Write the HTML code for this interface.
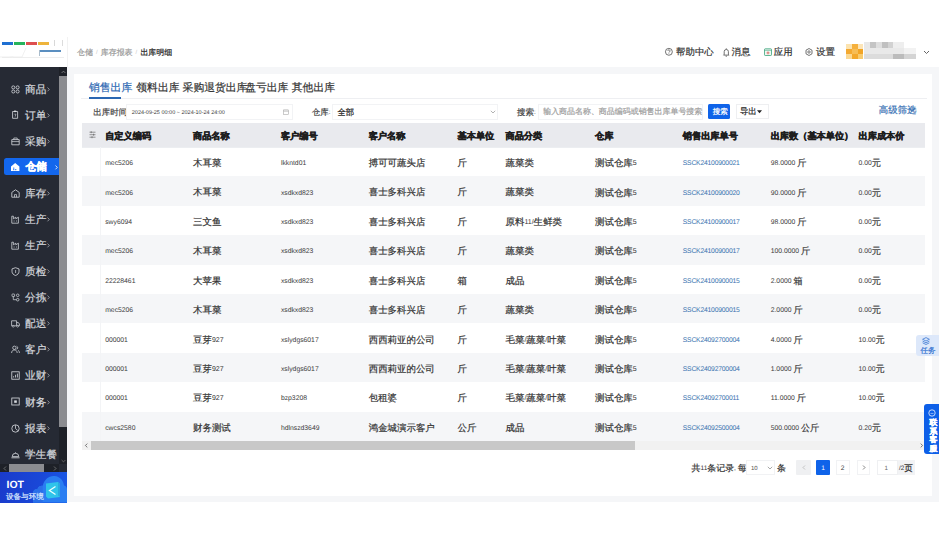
<!DOCTYPE html>
<html lang="zh"><head><meta charset="utf-8"><title>出库明细</title><style>
*{box-sizing:border-box;margin:0;padding:0}
html,body{width:939px;height:540px;overflow:hidden;background:#fff;font-family:"Liberation Sans",sans-serif;color:#333;text-rendering:geometricPrecision}
.a{position:absolute;white-space:nowrap}
.zh{font-size:1.35em;line-height:0;vertical-align:-0.094em;-webkit-text-stroke-width:0.2px}
.b .zh{-webkit-text-stroke-width:0.45px}
svg{position:absolute;overflow:visible}
</style></head><body>
<div class="a" style="left:2px;top:42px;width:11px;height:3px;background:#1f6fd2;"></div>
<div class="a" style="left:14px;top:42px;width:11px;height:3px;background:#27b35c;"></div>
<div class="a" style="left:26px;top:42px;width:11px;height:3px;background:#de4f4f;"></div>
<div class="a" style="left:38px;top:42px;width:11px;height:3px;background:#eeb43c;"></div>
<div class="a" style="left:39px;top:50px;width:22px;height:1.5px;background:#5b8fc0;"></div>
<div class="a" style="left:39px;top:50px;width:1px;height:6px;background:#a9bccc;"></div>
<div class="a" style="left:67px;top:37px;width:1px;height:30px;background:#f2f2f2;"></div>
<div class="a" style="left:54px;top:40px;width:0.8px;height:6px;background:#d8d8d8;"></div>
<div class="a" style="left:62px;top:40px;width:0.8px;height:6px;background:#dcdcdc;"></div>
<div class="a" style="left:2px;top:57px;width:62px;height:0.6px;background:#eeeeee;"></div>
<svg style="left:0;top:44px" width="40" height="14" viewBox="0 0 40 14"><path d="M0 13h8c3 0 4-1 6 0h8l4-9" fill="none" stroke="#e6e6e6" stroke-width="0.6"/></svg>
<div class="a" style="left:77px;top:47.26px;font-size:5.9px;line-height:12px;color:#9a9a9a;"><span class="zh">仓储</span><span style="color:#c8c8c8;margin:0 3.2px 0 3px">/</span><span class="zh">库存报表</span><span style="color:#c8c8c8;margin:0 3.2px 0 3px">/</span><span style="color:#222"><span class="zh">出库明细</span></span></div>
<svg style="left:664.8px;top:47.6px" width="8" height="8" viewBox="0 0 8 8"><circle cx="3.9" cy="3.8" r="3.45" fill="none" stroke="#444" stroke-width="0.75"/><path d="M2.8 2.9a1.1 1.1 0 1 1 1.6 1c-.4.2-.5.4-.5.8" fill="none" stroke="#444" stroke-width="0.7"/><circle cx="3.9" cy="5.7" r=".42" fill="#444"/></svg>
<div class="a" style="left:676px;top:47.37px;font-size:7px;line-height:12px;color:#333;"><span class="zh">帮助中心</span></div>
<svg style="left:722.8px;top:47.6px" width="7" height="9" viewBox="0 0 7 9"><path d="M1.2 6.4V3.6a2.1 2.1 0 0 1 4.2 0v2.8l.7.7H.5z" fill="none" stroke="#444" stroke-width="0.75"/><path d="M2.6 8.2h1.4M3.3 .3v1" stroke="#444" stroke-width="0.7"/></svg>
<div class="a" style="left:731.6px;top:47.37px;font-size:7px;line-height:12px;color:#333;"><span class="zh">消息</span></div>
<svg style="left:763.5px;top:48px" width="8" height="8" viewBox="0 0 8 8"><rect x=".5" y=".8" width="7" height="6.7" rx=".7" fill="#eef8f3" stroke="#3aa37a" stroke-width="0.8"/><path d="M.5 2.3h7" stroke="#3aa37a" stroke-width="0.6"/><path d="M4 3.4v3M2.5 4.9h3" stroke="#d9534f" stroke-width="0.75"/></svg>
<div class="a" style="left:773.8px;top:47.37px;font-size:7px;line-height:12px;color:#333;"><span class="zh">应用</span></div>
<svg style="left:805.2px;top:47.8px" width="8" height="8" viewBox="0 0 8 8"><path d="M4 .5L7 2.2v3.6L4 7.5 1 5.8V2.2z" fill="none" stroke="#444" stroke-width="0.75" stroke-linejoin="round"/><circle cx="4" cy="4" r="1.2" fill="none" stroke="#444" stroke-width="0.7"/></svg>
<div class="a" style="left:816px;top:47.37px;font-size:7px;line-height:12px;color:#333;"><span class="zh">设置</span></div>
<div class="a" style="left:0;top:0;width:939px;height:70px;filter:blur(0.6px)">
<div class="a" style="left:846px;top:44px;width:5.5px;height:4.5px;background:#fbe3b0;"></div>
<div class="a" style="left:851.5px;top:44px;width:6px;height:4.5px;background:#f5b03c;"></div>
<div class="a" style="left:857.5px;top:44px;width:5.5px;height:4.5px;background:#fce5b8;"></div>
<div class="a" style="left:846px;top:48.5px;width:5.5px;height:5.5px;background:#f4a931;"></div>
<div class="a" style="left:851.5px;top:48.5px;width:6px;height:5.5px;background:#f7bd55;"></div>
<div class="a" style="left:857.5px;top:48.5px;width:5.5px;height:5.5px;background:#f2a526;"></div>
<div class="a" style="left:846px;top:54px;width:5.5px;height:5px;background:#fbd892;"></div>
<div class="a" style="left:851.5px;top:54px;width:6px;height:5px;background:#f3a82c;"></div>
<div class="a" style="left:857.5px;top:54px;width:5.5px;height:5px;background:#f8cb6e;"></div>
<div class="a" style="left:864px;top:42px;width:5.5px;height:6px;background:#e8e8e8;"></div>
<div class="a" style="left:869.5px;top:42px;width:6.5px;height:6px;background:#c4c4c4;"></div>
<div class="a" style="left:876px;top:42px;width:5.5px;height:6px;background:#dedede;"></div>
<div class="a" style="left:881.5px;top:42px;width:6px;height:6px;background:#c0c0c0;"></div>
<div class="a" style="left:887.5px;top:42px;width:5.5px;height:6px;background:#d2d2d2;"></div>
<div class="a" style="left:893px;top:42px;width:11px;height:6px;background:#eeeeee;"></div>
<div class="a" style="left:864px;top:48px;width:40px;height:6px;background:#e9e9e9;"></div>
<div class="a" style="left:904px;top:48px;width:12px;height:6px;background:#f2f2f2;"></div>
<div class="a" style="left:864px;top:54px;width:29px;height:5px;background:#dcdcdc;"></div>
<div class="a" style="left:893px;top:54px;width:11px;height:5px;background:#bcbcbc;"></div>
<div class="a" style="left:904px;top:54px;width:12px;height:5px;background:#d4d4d4;"></div>
</div>
<svg style="left:922.5px;top:49.5px" width="7" height="5" viewBox="0 0 7 5"><path d="M1 1l2.5 2.5L6 1" fill="none" stroke="#555" stroke-width="0.9"/></svg>
<div class="a" style="left:67px;top:67px;width:872px;height:435px;background:#f5f6f8;"></div>
<div class="a" style="left:74px;top:74px;width:858px;height:422px;background:#ffffff;"></div>
<div class="a" style="left:89px;top:82.45px;font-size:8px;line-height:12px;color:#2b67b2;"><span class="zh">销售出库</span></div>
<div class="a" style="left:136.3px;top:82.45px;font-size:8px;line-height:12px;color:#333;"><span class="zh">领料出库</span></div>
<div class="a" style="left:182.6px;top:82.45px;font-size:8px;line-height:12px;color:#333;"><span class="zh">采购退货出库</span></div>
<div class="a" style="left:245.2px;top:82.45px;font-size:8px;line-height:12px;color:#333;"><span class="zh">盘亏出库</span></div>
<div class="a" style="left:291.8px;top:82.45px;font-size:8px;line-height:12px;color:#333;"><span class="zh">其他出库</span></div>
<div class="a" style="left:81px;top:98px;width:846px;height:1px;background:#eeeff2;"></div>
<div class="a" style="left:89px;top:97.4px;width:32px;height:1.6px;background:#2b67b2;"></div>
<div class="a" style="left:93.2px;top:107.19px;font-size:6.3px;line-height:12px;color:#444;"><span class="zh">出库时间</span>:</div>
<div class="a" style="left:126px;top:103.5px;width:166.5px;height:16.5px;background:#fff;border:1px solid #f2f3f5"></div>
<div class="a" style="left:131.8px;top:106.72px;font-size:5.5px;line-height:12px;color:#3a3a3a;">2024-09-25 00:00 ~ 2024-10-24 24:00</div>
<svg style="left:283px;top:108.5px" width="6" height="6" viewBox="0 0 6 6"><rect x=".5" y="1" width="5" height="4.5" fill="none" stroke="#aaa" stroke-width="0.6"/><path d="M.5 2.4h5M2 .3v1.2M4 .3v1.2" stroke="#aaa" stroke-width="0.5"/></svg>
<div class="a" style="left:311.7px;top:107.19px;font-size:6.3px;line-height:12px;color:#444;"><span class="zh">仓库</span>:</div>
<div class="a" style="left:331.6px;top:103.5px;width:166.5px;height:16.5px;background:#fff;border:1px solid #f2f3f5"></div>
<div class="a" style="left:337.5px;top:106.74px;font-size:6.2px;line-height:12px;color:#222;"><span class="zh">全部</span></div>
<svg style="left:489.5px;top:110px" width="6" height="4" viewBox="0 0 6 4"><path d="M.8 .8L3 3l2.2-2.2" fill="none" stroke="#888" stroke-width="0.65"/></svg>
<div class="a" style="left:517px;top:107.19px;font-size:6.3px;line-height:12px;color:#444;"><span class="zh">搜索</span>:</div>
<div class="a" style="left:537.7px;top:103.5px;width:165px;height:16px;background:#fff;border:1px solid #f2f3f5"></div>
<div class="a" style="left:543.2px;top:106.36px;font-size:5.9px;line-height:12px;color:#a0a0a0;"><span class="zh">输入商品名称、商品编码或销售出库单号搜索</span></div>
<div class="a" style="left:707.7px;top:104px;width:22.5px;height:14.5px;background:#0f63e9;border-radius:1.5px"></div>
<div class="a" style="left:712.8px;top:106.26px;font-size:5.6px;line-height:12px;color:#fff;"><span class="zh">搜索</span></div>
<div class="a" style="left:736px;top:104px;width:33px;height:14.5px;background:#fff;border:1px solid #eeeff1"></div>
<div class="a" style="left:740px;top:106.24px;font-size:6.2px;line-height:12px;color:#222;"><span class="zh">导出</span></div>
<svg style="left:757px;top:109.8px" width="5" height="4" viewBox="0 0 5 4"><path d="M0 .3h5L2.5 3.3z" fill="#222"/></svg>
<div class="a" style="left:878.8px;top:104.67px;font-size:7px;line-height:12px;color:#3c74b6;"><span class="zh">高级筛选</span></div>
<svg style="left:907.5px;top:106.5px" width="8" height="6" viewBox="0 0 8 6"><path d="M.8 1l3.2 3.3L7.2 1" fill="none" stroke="#3c74b6" stroke-width="1.1"/></svg>
<div class="a" style="left:82px;top:123px;width:843px;height:24px;background:#e9eaee;"></div>
<div class="a" style="left:82px;top:146.5px;width:843px;height:0.5px;background:#eceef1;"></div>
<svg style="left:89px;top:131px" width="7" height="8" viewBox="0 0 7 8"><path d="M.5 1.2h6M.5 3.7h6M.5 6.2h6M2.2 .2v2M4.6 2.7v2M3 5.2v2" stroke="#555" stroke-width="0.6"/></svg>
<div class="a b" style="left:105.2px;top:131.19px;font-size:6.8px;line-height:12px;color:#1f1f1f;font-weight:bold"><span class="zh">自定义编码</span></div>
<div class="a b" style="left:193px;top:131.19px;font-size:6.8px;line-height:12px;color:#1f1f1f;font-weight:bold"><span class="zh">商品名称</span></div>
<div class="a b" style="left:280.9px;top:131.19px;font-size:6.8px;line-height:12px;color:#1f1f1f;font-weight:bold"><span class="zh">客户编号</span></div>
<div class="a b" style="left:368.7px;top:131.19px;font-size:6.8px;line-height:12px;color:#1f1f1f;font-weight:bold"><span class="zh">客户名称</span></div>
<div class="a b" style="left:457.6px;top:131.19px;font-size:6.8px;line-height:12px;color:#1f1f1f;font-weight:bold"><span class="zh">基本单位</span></div>
<div class="a b" style="left:505.5px;top:131.19px;font-size:6.8px;line-height:12px;color:#1f1f1f;font-weight:bold"><span class="zh">商品分类</span></div>
<div class="a b" style="left:595px;top:131.19px;font-size:6.8px;line-height:12px;color:#1f1f1f;font-weight:bold"><span class="zh">仓库</span></div>
<div class="a b" style="left:682.8px;top:131.19px;font-size:6.8px;line-height:12px;color:#1f1f1f;font-weight:bold"><span class="zh">销售出库单号</span></div>
<div class="a b" style="left:770.7px;top:131.19px;font-size:6.8px;line-height:12px;color:#1f1f1f;font-weight:bold"><span class="zh">出库数（基本单位）</span></div>
<div class="a b" style="left:858.6px;top:131.19px;font-size:6.8px;line-height:12px;color:#1f1f1f;font-weight:bold"><span class="zh">出库成本价</span></div>
<div class="a" style="left:100px;top:147.0px;width:0.5px;height:29.41px;background:#f3f4f6;"></div>
<div class="a" style="left:105.2px;top:158.11px;font-size:6.8px;line-height:12px;color:#3c3c3c;">mec5206</div>
<div class="a" style="left:193px;top:158.07px;font-size:7px;line-height:12px;color:#333;"><span class="zh">木耳菜</span></div>
<div class="a" style="left:280.9px;top:158.11px;font-size:6.8px;line-height:12px;color:#3c3c3c;">lkkntd01</div>
<div class="a" style="left:368.7px;top:158.07px;font-size:7px;line-height:12px;color:#333;"><span class="zh">搏可可蔬头店</span></div>
<div class="a" style="left:457.6px;top:158.07px;font-size:7px;line-height:12px;color:#333;"><span class="zh">斤</span></div>
<div class="a" style="left:505.5px;top:158.07px;font-size:7px;line-height:12px;color:#333;"><span class="zh">蔬菜类</span></div>
<div class="a" style="left:595px;top:158.09px;font-size:7px;line-height:12px;color:#333;"><span class="zh">测试仓库</span>5</div>
<div class="a" style="left:682.8px;top:158.11px;font-size:6.8px;line-height:12px;color:#3a74b0;letter-spacing:-0.22px">SSCK24100900021</div>
<div class="a" style="left:770.7px;top:158.16px;font-size:6.8px;line-height:12px;color:#3c3c3c;">98.0000 <span class="zh">斤</span></div>
<div class="a" style="left:858.6px;top:158.16px;font-size:6.8px;line-height:12px;color:#3c3c3c;">0.00<span class="zh">元</span></div>
<div class="a" style="left:82px;top:176.41px;width:843px;height:29.41px;background:#f5f6f8;"></div>
<div class="a" style="left:100px;top:176.41px;width:0.5px;height:29.41px;background:#f3f4f6;"></div>
<div class="a" style="left:105.2px;top:187.52px;font-size:6.8px;line-height:12px;color:#3c3c3c;">mec5206</div>
<div class="a" style="left:193px;top:187.48px;font-size:7px;line-height:12px;color:#333;"><span class="zh">木耳菜</span></div>
<div class="a" style="left:280.9px;top:187.52px;font-size:6.8px;line-height:12px;color:#3c3c3c;">xsdkxd823</div>
<div class="a" style="left:368.7px;top:187.48px;font-size:7px;line-height:12px;color:#333;"><span class="zh">喜士多科兴店</span></div>
<div class="a" style="left:457.6px;top:187.48px;font-size:7px;line-height:12px;color:#333;"><span class="zh">斤</span></div>
<div class="a" style="left:505.5px;top:187.48px;font-size:7px;line-height:12px;color:#333;"><span class="zh">蔬菜类</span></div>
<div class="a" style="left:595px;top:187.50px;font-size:7px;line-height:12px;color:#333;"><span class="zh">测试仓库</span>5</div>
<div class="a" style="left:682.8px;top:187.52px;font-size:6.8px;line-height:12px;color:#3a74b0;letter-spacing:-0.22px">SSCK24100900020</div>
<div class="a" style="left:770.7px;top:187.57px;font-size:6.8px;line-height:12px;color:#3c3c3c;">90.0000 <span class="zh">斤</span></div>
<div class="a" style="left:858.6px;top:187.57px;font-size:6.8px;line-height:12px;color:#3c3c3c;">0.00<span class="zh">元</span></div>
<div class="a" style="left:100px;top:205.82px;width:0.5px;height:29.41px;background:#f3f4f6;"></div>
<div class="a" style="left:105.2px;top:216.93px;font-size:6.8px;line-height:12px;color:#3c3c3c;">swy6094</div>
<div class="a" style="left:193px;top:216.89px;font-size:7px;line-height:12px;color:#333;"><span class="zh">三文鱼</span></div>
<div class="a" style="left:280.9px;top:216.93px;font-size:6.8px;line-height:12px;color:#3c3c3c;">xsdkxd823</div>
<div class="a" style="left:368.7px;top:216.89px;font-size:7px;line-height:12px;color:#333;"><span class="zh">喜士多科兴店</span></div>
<div class="a" style="left:457.6px;top:216.89px;font-size:7px;line-height:12px;color:#333;"><span class="zh">斤</span></div>
<div class="a" style="left:505.5px;top:216.91px;font-size:7px;line-height:12px;color:#333;"><span class="zh">原料</span>11/<span class="zh">生鲜类</span></div>
<div class="a" style="left:595px;top:216.91px;font-size:7px;line-height:12px;color:#333;"><span class="zh">测试仓库</span>5</div>
<div class="a" style="left:682.8px;top:216.93px;font-size:6.8px;line-height:12px;color:#3a74b0;letter-spacing:-0.22px">SSCK24100900017</div>
<div class="a" style="left:770.7px;top:216.98px;font-size:6.8px;line-height:12px;color:#3c3c3c;">98.0000 <span class="zh">斤</span></div>
<div class="a" style="left:858.6px;top:216.98px;font-size:6.8px;line-height:12px;color:#3c3c3c;">0.00<span class="zh">元</span></div>
<div class="a" style="left:82px;top:235.23000000000002px;width:843px;height:29.41px;background:#f5f6f8;"></div>
<div class="a" style="left:100px;top:235.23000000000002px;width:0.5px;height:29.41px;background:#f3f4f6;"></div>
<div class="a" style="left:105.2px;top:246.34px;font-size:6.8px;line-height:12px;color:#3c3c3c;">mec5206</div>
<div class="a" style="left:193px;top:246.30px;font-size:7px;line-height:12px;color:#333;"><span class="zh">木耳菜</span></div>
<div class="a" style="left:280.9px;top:246.34px;font-size:6.8px;line-height:12px;color:#3c3c3c;">xsdkxd823</div>
<div class="a" style="left:368.7px;top:246.30px;font-size:7px;line-height:12px;color:#333;"><span class="zh">喜士多科兴店</span></div>
<div class="a" style="left:457.6px;top:246.30px;font-size:7px;line-height:12px;color:#333;"><span class="zh">斤</span></div>
<div class="a" style="left:505.5px;top:246.30px;font-size:7px;line-height:12px;color:#333;"><span class="zh">蔬菜类</span></div>
<div class="a" style="left:595px;top:246.32px;font-size:7px;line-height:12px;color:#333;"><span class="zh">测试仓库</span>5</div>
<div class="a" style="left:682.8px;top:246.34px;font-size:6.8px;line-height:12px;color:#3a74b0;letter-spacing:-0.22px">SSCK24100900017</div>
<div class="a" style="left:770.7px;top:246.39px;font-size:6.8px;line-height:12px;color:#3c3c3c;">100.0000 <span class="zh">斤</span></div>
<div class="a" style="left:858.6px;top:246.39px;font-size:6.8px;line-height:12px;color:#3c3c3c;">0.00<span class="zh">元</span></div>
<div class="a" style="left:100px;top:264.64px;width:0.5px;height:29.41px;background:#f3f4f6;"></div>
<div class="a" style="left:105.2px;top:275.75px;font-size:6.8px;line-height:12px;color:#3c3c3c;">22228461</div>
<div class="a" style="left:193px;top:275.71px;font-size:7px;line-height:12px;color:#333;"><span class="zh">大苹果</span></div>
<div class="a" style="left:280.9px;top:275.75px;font-size:6.8px;line-height:12px;color:#3c3c3c;">xsdkxd823</div>
<div class="a" style="left:368.7px;top:275.71px;font-size:7px;line-height:12px;color:#333;"><span class="zh">喜士多科兴店</span></div>
<div class="a" style="left:457.6px;top:275.71px;font-size:7px;line-height:12px;color:#333;"><span class="zh">箱</span></div>
<div class="a" style="left:505.5px;top:275.71px;font-size:7px;line-height:12px;color:#333;"><span class="zh">成品</span></div>
<div class="a" style="left:595px;top:275.73px;font-size:7px;line-height:12px;color:#333;"><span class="zh">测试仓库</span>5</div>
<div class="a" style="left:682.8px;top:275.75px;font-size:6.8px;line-height:12px;color:#3a74b0;letter-spacing:-0.22px">SSCK24100900015</div>
<div class="a" style="left:770.7px;top:275.80px;font-size:6.8px;line-height:12px;color:#3c3c3c;">2.0000 <span class="zh">箱</span></div>
<div class="a" style="left:858.6px;top:275.80px;font-size:6.8px;line-height:12px;color:#3c3c3c;">0.00<span class="zh">元</span></div>
<div class="a" style="left:82px;top:294.05px;width:843px;height:29.41px;background:#f5f6f8;"></div>
<div class="a" style="left:100px;top:294.05px;width:0.5px;height:29.41px;background:#f3f4f6;"></div>
<div class="a" style="left:105.2px;top:305.16px;font-size:6.8px;line-height:12px;color:#3c3c3c;">mec5206</div>
<div class="a" style="left:193px;top:305.12px;font-size:7px;line-height:12px;color:#333;"><span class="zh">木耳菜</span></div>
<div class="a" style="left:280.9px;top:305.16px;font-size:6.8px;line-height:12px;color:#3c3c3c;">xsdkxd823</div>
<div class="a" style="left:368.7px;top:305.12px;font-size:7px;line-height:12px;color:#333;"><span class="zh">喜士多科兴店</span></div>
<div class="a" style="left:457.6px;top:305.12px;font-size:7px;line-height:12px;color:#333;"><span class="zh">斤</span></div>
<div class="a" style="left:505.5px;top:305.12px;font-size:7px;line-height:12px;color:#333;"><span class="zh">蔬菜类</span></div>
<div class="a" style="left:595px;top:305.14px;font-size:7px;line-height:12px;color:#333;"><span class="zh">测试仓库</span>5</div>
<div class="a" style="left:682.8px;top:305.16px;font-size:6.8px;line-height:12px;color:#3a74b0;letter-spacing:-0.22px">SSCK24100900015</div>
<div class="a" style="left:770.7px;top:305.21px;font-size:6.8px;line-height:12px;color:#3c3c3c;">2.0000 <span class="zh">斤</span></div>
<div class="a" style="left:858.6px;top:305.21px;font-size:6.8px;line-height:12px;color:#3c3c3c;">0.00<span class="zh">元</span></div>
<div class="a" style="left:100px;top:323.46000000000004px;width:0.5px;height:29.41px;background:#f3f4f6;"></div>
<div class="a" style="left:105.2px;top:334.57px;font-size:6.8px;line-height:12px;color:#3c3c3c;">000001</div>
<div class="a" style="left:193px;top:334.55px;font-size:7px;line-height:12px;color:#333;"><span class="zh">豆芽</span>927</div>
<div class="a" style="left:280.9px;top:334.57px;font-size:6.8px;line-height:12px;color:#3c3c3c;">xslydgs6017</div>
<div class="a" style="left:368.7px;top:334.53px;font-size:7px;line-height:12px;color:#333;"><span class="zh">西西莉亚的公司</span></div>
<div class="a" style="left:457.6px;top:334.53px;font-size:7px;line-height:12px;color:#333;"><span class="zh">斤</span></div>
<div class="a" style="left:505.5px;top:334.55px;font-size:7px;line-height:12px;color:#333;"><span class="zh">毛菜</span>/<span class="zh">蔬菜</span>/<span class="zh">叶菜</span></div>
<div class="a" style="left:595px;top:334.55px;font-size:7px;line-height:12px;color:#333;"><span class="zh">测试仓库</span>5</div>
<div class="a" style="left:682.8px;top:334.57px;font-size:6.8px;line-height:12px;color:#3a74b0;letter-spacing:-0.22px">SSCK24092700004</div>
<div class="a" style="left:770.7px;top:334.62px;font-size:6.8px;line-height:12px;color:#3c3c3c;">4.0000 <span class="zh">斤</span></div>
<div class="a" style="left:858.6px;top:334.62px;font-size:6.8px;line-height:12px;color:#3c3c3c;">10.00<span class="zh">元</span></div>
<div class="a" style="left:82px;top:352.87px;width:843px;height:29.41px;background:#f5f6f8;"></div>
<div class="a" style="left:100px;top:352.87px;width:0.5px;height:29.41px;background:#f3f4f6;"></div>
<div class="a" style="left:105.2px;top:363.98px;font-size:6.8px;line-height:12px;color:#3c3c3c;">000001</div>
<div class="a" style="left:193px;top:363.96px;font-size:7px;line-height:12px;color:#333;"><span class="zh">豆芽</span>927</div>
<div class="a" style="left:280.9px;top:363.98px;font-size:6.8px;line-height:12px;color:#3c3c3c;">xslydgs6017</div>
<div class="a" style="left:368.7px;top:363.94px;font-size:7px;line-height:12px;color:#333;"><span class="zh">西西莉亚的公司</span></div>
<div class="a" style="left:457.6px;top:363.94px;font-size:7px;line-height:12px;color:#333;"><span class="zh">斤</span></div>
<div class="a" style="left:505.5px;top:363.96px;font-size:7px;line-height:12px;color:#333;"><span class="zh">毛菜</span>/<span class="zh">蔬菜</span>/<span class="zh">叶菜</span></div>
<div class="a" style="left:595px;top:363.96px;font-size:7px;line-height:12px;color:#333;"><span class="zh">测试仓库</span>5</div>
<div class="a" style="left:682.8px;top:363.98px;font-size:6.8px;line-height:12px;color:#3a74b0;letter-spacing:-0.22px">SSCK24092700004</div>
<div class="a" style="left:770.7px;top:364.03px;font-size:6.8px;line-height:12px;color:#3c3c3c;">1.0000 <span class="zh">斤</span></div>
<div class="a" style="left:858.6px;top:364.03px;font-size:6.8px;line-height:12px;color:#3c3c3c;">10.00<span class="zh">元</span></div>
<div class="a" style="left:100px;top:382.28px;width:0.5px;height:29.41px;background:#f3f4f6;"></div>
<div class="a" style="left:105.2px;top:393.39px;font-size:6.8px;line-height:12px;color:#3c3c3c;">000001</div>
<div class="a" style="left:193px;top:393.37px;font-size:7px;line-height:12px;color:#333;"><span class="zh">豆芽</span>927</div>
<div class="a" style="left:280.9px;top:393.39px;font-size:6.8px;line-height:12px;color:#3c3c3c;">bzp3208</div>
<div class="a" style="left:368.7px;top:393.35px;font-size:7px;line-height:12px;color:#333;"><span class="zh">包租婆</span></div>
<div class="a" style="left:457.6px;top:393.35px;font-size:7px;line-height:12px;color:#333;"><span class="zh">斤</span></div>
<div class="a" style="left:505.5px;top:393.37px;font-size:7px;line-height:12px;color:#333;"><span class="zh">毛菜</span>/<span class="zh">蔬菜</span>/<span class="zh">叶菜</span></div>
<div class="a" style="left:595px;top:393.37px;font-size:7px;line-height:12px;color:#333;"><span class="zh">测试仓库</span>5</div>
<div class="a" style="left:682.8px;top:393.39px;font-size:6.8px;line-height:12px;color:#3a74b0;letter-spacing:-0.22px">SSCK24092700011</div>
<div class="a" style="left:770.7px;top:393.44px;font-size:6.8px;line-height:12px;color:#3c3c3c;">11.0000 <span class="zh">斤</span></div>
<div class="a" style="left:858.6px;top:393.44px;font-size:6.8px;line-height:12px;color:#3c3c3c;">10.00<span class="zh">元</span></div>
<div class="a" style="left:82px;top:411.69px;width:843px;height:29.41px;background:#f5f6f8;"></div>
<div class="a" style="left:100px;top:411.69px;width:0.5px;height:29.41px;background:#f3f4f6;"></div>
<div class="a" style="left:105.2px;top:422.80px;font-size:6.8px;line-height:12px;color:#3c3c3c;">cwcs2580</div>
<div class="a" style="left:193px;top:422.76px;font-size:7px;line-height:12px;color:#333;"><span class="zh">财务测试</span></div>
<div class="a" style="left:280.9px;top:422.80px;font-size:6.8px;line-height:12px;color:#3c3c3c;">hdlnszd3649</div>
<div class="a" style="left:368.7px;top:422.76px;font-size:7px;line-height:12px;color:#333;"><span class="zh">鸿金城演示客户</span></div>
<div class="a" style="left:457.6px;top:422.76px;font-size:7px;line-height:12px;color:#333;"><span class="zh">公斤</span></div>
<div class="a" style="left:505.5px;top:422.76px;font-size:7px;line-height:12px;color:#333;"><span class="zh">成品</span></div>
<div class="a" style="left:595px;top:422.78px;font-size:7px;line-height:12px;color:#333;"><span class="zh">测试仓库</span>5</div>
<div class="a" style="left:682.8px;top:422.80px;font-size:6.8px;line-height:12px;color:#3a74b0;letter-spacing:-0.22px">SSCK24092500004</div>
<div class="a" style="left:770.7px;top:422.85px;font-size:6.8px;line-height:12px;color:#3c3c3c;">500.0000 <span class="zh">公斤</span></div>
<div class="a" style="left:858.6px;top:422.85px;font-size:6.8px;line-height:12px;color:#3c3c3c;">0.20<span class="zh">元</span></div>
<div class="a" style="left:82px;top:441.2px;width:843px;height:8.4px;background:#f1f1f1;"></div>
<div class="a" style="left:90.5px;top:441.2px;width:544px;height:8.4px;background:#c8c8c8;"></div>
<svg style="left:83.5px;top:443.2px" width="5" height="5" viewBox="0 0 5 5"><path d="M3.3 .6L1.4 2.5l1.9 1.9" fill="none" stroke="#555" stroke-width="0.8"/></svg>
<svg style="left:918.5px;top:443.2px" width="5" height="5" viewBox="0 0 5 5"><path d="M1.7 .6l1.9 1.9-1.9 1.9" fill="none" stroke="#555" stroke-width="0.8"/></svg>
<div class="a" style="left:691.6px;top:462.85px;font-size:6.6px;line-height:12px;color:#333;"><span class="zh">共</span>11<span class="zh">条记录</span>, <span class="zh">每页</span></div>
<div class="a" style="left:745.7px;top:460px;width:29.5px;height:15px;background:#fff;border:1px solid #f1f2f4"></div>
<div class="a" style="left:751px;top:462.56px;font-size:6px;line-height:12px;color:#555;">10</div>
<svg style="left:766.5px;top:466px" width="6" height="4" viewBox="0 0 6 4"><path d="M.8 .8L3 3l2.2-2.2" fill="none" stroke="#777" stroke-width="0.65"/></svg>
<div class="a" style="left:777px;top:462.88px;font-size:6.6px;line-height:12px;color:#333;"><span class="zh">条</span></div>
<div class="a" style="left:796px;top:459.7px;width:15px;height:15.1px;background:#eff0f2;border-radius:1px"></div>
<svg style="left:801.5px;top:465px" width="4" height="5" viewBox="0 0 4 5"><path d="M3 .5L1 2.5l2 2" fill="none" stroke="#aaa" stroke-width="0.65"/></svg>
<div class="a" style="left:815.7px;top:459.7px;width:14.6px;height:15.1px;background:#0f63e9;border-radius:1px"></div>
<div class="a" style="left:821.3px;top:462.82px;font-size:6.6px;line-height:12px;color:#fff;">1</div>
<div class="a" style="left:835.9px;top:459.7px;width:13.8px;height:15.1px;background:#fff;border:1px solid #f1f2f4"></div>
<div class="a" style="left:840.8px;top:462.82px;font-size:6.6px;line-height:12px;color:#333;">2</div>
<div class="a" style="left:856.6px;top:459.7px;width:13.7px;height:15.1px;background:#fff;border:1px solid #f1f2f4"></div>
<svg style="left:861.8px;top:465px" width="4" height="5" viewBox="0 0 4 5"><path d="M1 .5l2 2-2 2" fill="none" stroke="#444" stroke-width="0.65"/></svg>
<div class="a" style="left:877px;top:459.7px;width:21px;height:15.1px;background:#fff;border:1px solid #eff0f2"></div>
<div class="a" style="left:884.5px;top:462.72px;font-size:6.2px;line-height:12px;color:#666;">1</div>
<div class="a" style="left:898px;top:459.7px;width:16.5px;height:15.1px;background:#f2f3f5;"></div>
<div class="a" style="left:899px;top:462.80px;font-size:6.4px;line-height:12px;color:#333;">/2<span class="zh">页</span></div>
<div class="a" style="left:916.2px;top:334.5px;width:30px;height:21.8px;background:#dde8fa;border-radius:3px 0 0 3px"></div>
<svg style="left:922px;top:337.3px" width="8" height="8" viewBox="0 0 8 8"><path d="M4 .6L7.4 2.3 4 4 .6 2.3z" fill="none" stroke="#3070d0" stroke-width="0.75"/><path d="M.6 4.1L4 5.8l3.4-1.7M.6 5.8L4 7.5l3.4-1.7" fill="none" stroke="#3070d0" stroke-width="0.75"/></svg>
<div class="a" style="left:920.5px;top:345.26px;font-size:5.6px;line-height:12px;color:#3070d0;"><span class="zh">任务</span></div>
<div class="a" style="left:924.2px;top:403.8px;width:20px;height:50px;background:#0d5fe8;border-radius:3px 0 0 3px"></div>
<svg style="left:928.2px;top:408.5px" width="8" height="8" viewBox="0 0 8 8"><circle cx="4" cy="4" r="3.2" fill="none" stroke="#fff" stroke-width="0.75"/><path d="M2.5 4.4h3" stroke="#fff" stroke-width="0.5"/></svg>
<div class="a b" style="left:929.5px;top:417.28px;font-size:5.8px;line-height:12px;color:#fff;font-weight:bold"><span class="zh">联</span></div>
<div class="a b" style="left:929.5px;top:425.88px;font-size:5.8px;line-height:12px;color:#fff;font-weight:bold"><span class="zh">系</span></div>
<div class="a b" style="left:929.5px;top:434.48px;font-size:5.8px;line-height:12px;color:#fff;font-weight:bold"><span class="zh">客</span></div>
<div class="a b" style="left:929.5px;top:443.08px;font-size:5.8px;line-height:12px;color:#fff;font-weight:bold"><span class="zh">服</span></div>
<div class="a" style="left:0px;top:67px;width:67px;height:405px;background:#262a34;"></div>
<div class="a" style="left:59px;top:67px;width:8px;height:397px;background:#1e2128;"></div>
<div class="a" style="left:59px;top:75.8px;width:8px;height:351.5px;background:#8b8c90;"></div>
<svg style="left:60.5px;top:69.5px" width="5" height="4" viewBox="0 0 5 4"><path d="M.6 3L2.5 1.1 4.4 3" fill="none" stroke="#aaa" stroke-width="0.6"/></svg>
<svg style="left:60.5px;top:458.5px" width="5" height="4" viewBox="0 0 5 4"><path d="M.6 1L2.5 2.9 4.4 1" fill="none" stroke="#888" stroke-width="0.6"/></svg>
<div class="a" style="left:0px;top:463.8px;width:59px;height:8px;background:#1e2128;"></div>
<div class="a" style="left:9.2px;top:463.8px;width:34.8px;height:8px;background:#8b8c90;"></div>
<svg style="left:3px;top:465.8px" width="4" height="5" viewBox="0 0 4 5"><path d="M3 .5L1 2.5l2 2" fill="none" stroke="#999" stroke-width="0.6"/></svg>
<svg style="left:52.5px;top:465.8px" width="4" height="5" viewBox="0 0 4 5"><path d="M1 .5l2 2-2 2" fill="none" stroke="#999" stroke-width="0.6"/></svg>
<svg style="left:10.6px;top:84.5px" width="9" height="9" viewBox="0 0 9 9"><rect x=".8" y=".9" width="3" height="3" rx="1.4" fill="none" stroke="#d9dce1" stroke-width="0.8"/><rect x="5.1" y=".9" width="3" height="3" rx="1.4" fill="none" stroke="#d9dce1" stroke-width="0.8"/><rect x=".8" y="5" width="3" height="3" rx="1.4" fill="none" stroke="#d9dce1" stroke-width="0.8"/><rect x="5.1" y="5" width="3" height="3" rx="1.4" fill="none" stroke="#d9dce1" stroke-width="0.8"/></svg>
<div class="a" style="left:25.1px;top:83.85px;font-size:7.9px;line-height:12px;color:#d5d8dd;"><span class="zh">商品</span></div>
<svg style="left:46.5px;top:86.8px" width="3" height="5" viewBox="0 0 3 5"><path d="M.5.5l1.8 1.9L.5 4.3" fill="none" stroke="#a3a7ae" stroke-width="0.8"/></svg>
<svg style="left:10.6px;top:110.3px" width="9" height="9" viewBox="0 0 9 9"><path d="M1.6 1.5h5v6.8h-5z" fill="none" stroke="#d9dce1" stroke-width="0.8"/><path d="M3 .6h2.2v1.5H3z" fill="#d9dce1"/><path d="M3.4 4.2h1.5l-.7 2.4" fill="none" stroke="#d9dce1" stroke-width="0.6"/></svg>
<div class="a" style="left:25.1px;top:109.65px;font-size:7.9px;line-height:12px;color:#d5d8dd;"><span class="zh">订单</span></div>
<svg style="left:46.5px;top:112.6px" width="3" height="5" viewBox="0 0 3 5"><path d="M.5.5l1.8 1.9L.5 4.3" fill="none" stroke="#a3a7ae" stroke-width="0.8"/></svg>
<svg style="left:10.6px;top:136.5px" width="9" height="9" viewBox="0 0 9 9"><path d="M.8 2.6h7.4v5.2H.8z" fill="none" stroke="#d9dce1" stroke-width="0.8"/><path d="M2.8 2.6V1h3.4v1.6M.8 4.6h7.4" fill="none" stroke="#d9dce1" stroke-width="0.7"/></svg>
<div class="a" style="left:25.1px;top:135.85px;font-size:7.9px;line-height:12px;color:#d5d8dd;"><span class="zh">采购</span></div>
<svg style="left:46.5px;top:138.8px" width="3" height="5" viewBox="0 0 3 5"><path d="M.5.5l1.8 1.9L.5 4.3" fill="none" stroke="#a3a7ae" stroke-width="0.8"/></svg>
<div class="a" style="left:4px;top:158.2px;width:55px;height:16.8px;background:#1367ed;border-radius:2.5px 0 0 2.5px"></div>
<svg style="left:10.8px;top:162.5px" width="9" height="8" viewBox="0 0 9 8"><path d="M0 3.4L4.2 0l4.2 3.4V8H0z" fill="#fff"/><rect x="2.2" y="4.6" width="1.1" height="1.1" fill="#1367ed"/><rect x="2.2" y="6.1" width="1.1" height="1.1" fill="#1367ed"/><rect x="4.2" y="6.1" width="1.1" height="1.1" fill="#1367ed"/></svg>
<div class="a b" style="left:25.4px;top:161.42px;font-size:7.9px;line-height:12px;color:#fff;font-weight:bold"><span class="zh">仓储</span></div>
<svg style="left:54.8px;top:164.60000000000002px" width="3" height="5" viewBox="0 0 3 5"><path d="M.5.5l1.8 1.9L.5 4.3" fill="none" stroke="#fff" stroke-width="0.8"/></svg>
<svg style="left:10.6px;top:188.9px" width="9" height="9" viewBox="0 0 9 9"><path d="M.8 3.4L4.5.8l3.7 2.6v4.8H.8z" fill="none" stroke="#d9dce1" stroke-width="0.8"/><path d="M3.5 8.2V5.6h2v2.6" fill="none" stroke="#d9dce1" stroke-width="0.7"/></svg>
<div class="a" style="left:25.1px;top:188.25px;font-size:7.9px;line-height:12px;color:#d5d8dd;"><span class="zh">库存</span></div>
<svg style="left:46.5px;top:191.20000000000002px" width="3" height="5" viewBox="0 0 3 5"><path d="M.5.5l1.8 1.9L.5 4.3" fill="none" stroke="#a3a7ae" stroke-width="0.8"/></svg>
<svg style="left:10.6px;top:215.1px" width="9" height="9" viewBox="0 0 9 9"><path d="M.8 8.2V1.2h1.6v2.6l2.4-1.6v1.6l2.6-1.6v6z" fill="none" stroke="#d9dce1" stroke-width="0.75"/><path d="M2.6 6h1M5 6h1" stroke="#d9dce1" stroke-width="0.7"/></svg>
<div class="a" style="left:25.1px;top:214.45px;font-size:7.9px;line-height:12px;color:#d5d8dd;"><span class="zh">生产</span></div>
<svg style="left:46.5px;top:217.4px" width="3" height="5" viewBox="0 0 3 5"><path d="M.5.5l1.8 1.9L.5 4.3" fill="none" stroke="#a3a7ae" stroke-width="0.8"/></svg>
<svg style="left:10.6px;top:241.0px" width="9" height="9" viewBox="0 0 9 9"><path d="M.8 8.2V1.2h1.6v2.6l2.4-1.6v1.6l2.6-1.6v6z" fill="none" stroke="#d9dce1" stroke-width="0.75"/><path d="M2.6 6h1M5 6h1" stroke="#d9dce1" stroke-width="0.7"/></svg>
<div class="a" style="left:25.1px;top:240.35px;font-size:7.9px;line-height:12px;color:#d5d8dd;"><span class="zh">生产</span></div>
<svg style="left:46.5px;top:243.3px" width="3" height="5" viewBox="0 0 3 5"><path d="M.5.5l1.8 1.9L.5 4.3" fill="none" stroke="#a3a7ae" stroke-width="0.8"/></svg>
<svg style="left:10.6px;top:267.0px" width="9" height="9" viewBox="0 0 9 9"><path d="M4.5.7L8 1.9v2.6c0 2-1.5 3.3-3.5 4C2.5 7.8 1 6.5 1 4.5V1.9z" fill="none" stroke="#d9dce1" stroke-width="0.8"/><path d="M4.6 3v3" stroke="#d9dce1" stroke-width="0.7"/></svg>
<div class="a" style="left:25.1px;top:266.35px;font-size:7.9px;line-height:12px;color:#d5d8dd;"><span class="zh">质检</span></div>
<svg style="left:46.5px;top:269.3px" width="3" height="5" viewBox="0 0 3 5"><path d="M.5.5l1.8 1.9L.5 4.3" fill="none" stroke="#a3a7ae" stroke-width="0.8"/></svg>
<svg style="left:10.6px;top:293.1px" width="9" height="9" viewBox="0 0 9 9"><rect x="1" y="1" width="2.6" height="2.6" rx=".6" fill="none" stroke="#d9dce1" stroke-width="0.7"/><rect x="5.4" y="1" width="2.6" height="2.6" rx="1.3" fill="none" stroke="#d9dce1" stroke-width="0.7"/><rect x="5.4" y="5.4" width="2.6" height="2.6" rx="1.3" fill="none" stroke="#d9dce1" stroke-width="0.7"/><path d="M2.3 3.6v3.1h3.1" fill="none" stroke="#d9dce1" stroke-width="0.7"/></svg>
<div class="a" style="left:25.1px;top:292.45px;font-size:7.9px;line-height:12px;color:#d5d8dd;"><span class="zh">分拣</span></div>
<svg style="left:46.5px;top:295.40000000000003px" width="3" height="5" viewBox="0 0 3 5"><path d="M.5.5l1.8 1.9L.5 4.3" fill="none" stroke="#a3a7ae" stroke-width="0.8"/></svg>
<svg style="left:10.6px;top:318.5px" width="9" height="9" viewBox="0 0 9 9"><path d="M.6 1.8h5v5H.6zM5.6 3.6h1.8l1 1.4v1.8H5.6" fill="none" stroke="#d9dce1" stroke-width="0.75"/><circle cx="2.2" cy="7.3" r=".9" fill="#262a34" stroke="#d9dce1" stroke-width="0.6"/><circle cx="6.6" cy="7.3" r=".9" fill="#262a34" stroke="#d9dce1" stroke-width="0.6"/></svg>
<div class="a" style="left:25.1px;top:317.85px;font-size:7.9px;line-height:12px;color:#d5d8dd;"><span class="zh">配送</span></div>
<svg style="left:46.5px;top:320.8px" width="3" height="5" viewBox="0 0 3 5"><path d="M.5.5l1.8 1.9L.5 4.3" fill="none" stroke="#a3a7ae" stroke-width="0.8"/></svg>
<svg style="left:10.6px;top:344.7px" width="9" height="9" viewBox="0 0 9 9"><circle cx="3.4" cy="2.8" r="1.7" fill="none" stroke="#d9dce1" stroke-width="0.75"/><path d="M.6 8c0-2 1.2-3 2.8-3s2.8 1 2.8 3" fill="none" stroke="#d9dce1" stroke-width="0.75"/><path d="M5.6 1.2a1.7 1.7 0 0 1 0 3.2M7 5.2c.8.4 1.4 1.3 1.4 2.8" fill="none" stroke="#d9dce1" stroke-width="0.7"/></svg>
<div class="a" style="left:25.1px;top:344.05px;font-size:7.9px;line-height:12px;color:#d5d8dd;"><span class="zh">客户</span></div>
<svg style="left:46.5px;top:347.0px" width="3" height="5" viewBox="0 0 3 5"><path d="M.5.5l1.8 1.9L.5 4.3" fill="none" stroke="#a3a7ae" stroke-width="0.8"/></svg>
<svg style="left:10.6px;top:371.0px" width="9" height="9" viewBox="0 0 9 9"><rect x=".8" y=".8" width="7.4" height="7.4" fill="none" stroke="#d9dce1" stroke-width="0.8"/><path d="M2.6 6.5V5.2M4.5 6.5V3.8M6.4 6.5V2.6" stroke="#d9dce1" stroke-width="0.8"/></svg>
<div class="a" style="left:25.1px;top:370.35px;font-size:7.9px;line-height:12px;color:#d5d8dd;"><span class="zh">业财</span></div>
<svg style="left:46.5px;top:373.3px" width="3" height="5" viewBox="0 0 3 5"><path d="M.5.5l1.8 1.9L.5 4.3" fill="none" stroke="#a3a7ae" stroke-width="0.8"/></svg>
<svg style="left:10.6px;top:397.2px" width="9" height="9" viewBox="0 0 9 9"><rect x=".8" y="1" width="7.4" height="7" fill="none" stroke="#d9dce1" stroke-width="0.8"/><rect x="3.2" y="3.4" width="2.6" height="2.4" fill="#d9dce1"/></svg>
<div class="a" style="left:25.1px;top:396.55px;font-size:7.9px;line-height:12px;color:#d5d8dd;"><span class="zh">财务</span></div>
<svg style="left:46.5px;top:399.5px" width="3" height="5" viewBox="0 0 3 5"><path d="M.5.5l1.8 1.9L.5 4.3" fill="none" stroke="#a3a7ae" stroke-width="0.8"/></svg>
<svg style="left:10.6px;top:423.9px" width="9" height="9" viewBox="0 0 9 9"><circle cx="4.5" cy="4.5" r="3.7" fill="none" stroke="#d9dce1" stroke-width="0.8"/><path d="M4.5 1.2v3.3l2.3 2.1" fill="none" stroke="#d9dce1" stroke-width="0.75"/></svg>
<div class="a" style="left:25.1px;top:423.25px;font-size:7.9px;line-height:12px;color:#d5d8dd;"><span class="zh">报表</span></div>
<svg style="left:46.5px;top:426.2px" width="3" height="5" viewBox="0 0 3 5"><path d="M.5.5l1.8 1.9L.5 4.3" fill="none" stroke="#a3a7ae" stroke-width="0.8"/></svg>
<svg style="left:10.6px;top:449.7px" width="9" height="9" viewBox="0 0 9 9"><path d="M1.2 6.6a3.3 3.3 0 0 1 6.6 0z" fill="none" stroke="#d9dce1" stroke-width="0.8"/><path d="M.4 7.8h8.2M4.5 2.4v.9" stroke="#d9dce1" stroke-width="0.8"/></svg>
<div class="a" style="left:25.1px;top:449.05px;font-size:7.9px;line-height:12px;color:#d5d8dd;"><span class="zh">学生餐</span></div>
<div class="a" style="left:0px;top:472px;width:67px;height:30.5px;background:linear-gradient(100deg,#1a3bcb 0%,#1a48d8 60%,#1a5ae6 100%);"></div>
<svg style="left:32px;top:474px" width="35" height="28.5" viewBox="0 0 35 28.5"><path d="M1 28.5V19c0-2.5 2-4 4.5-4 .8-2.5 3-3.6 5.2-3.2C12.5 5 17 1.5 22.5 2c5.5.5 9 4.5 9.5 9.5 2 .5 3 2 3 4V28.5z" fill="#2a7ef2"/><path d="M1 28.5V19c0-2.5 2-4 4.5-4 .8-2.5 3-3.6 5.2-3.2V28.5z" fill="#2a6fe8"/><path d="M14 9.5l12-1.5 2 2v13l-12 1.5-2-2z" fill="#2fc4ea"/><path d="M26 8l2 2v13l-2-1.5z" fill="#27a9e0"/><path d="M23.5 12.5l-6 4 6 4" fill="none" stroke="#eaffff" stroke-width="1.3"/></svg>
<div class="a" style="left:6.5px;top:478.65px;font-size:10.5px;line-height:12px;color:#fff;font-weight:bold">IOT</div>
<div class="a" style="left:6px;top:490.56px;font-size:5.6px;line-height:12px;color:#d8e6ff;"><span class="zh">设备与环境</span></div>
</body></html>
